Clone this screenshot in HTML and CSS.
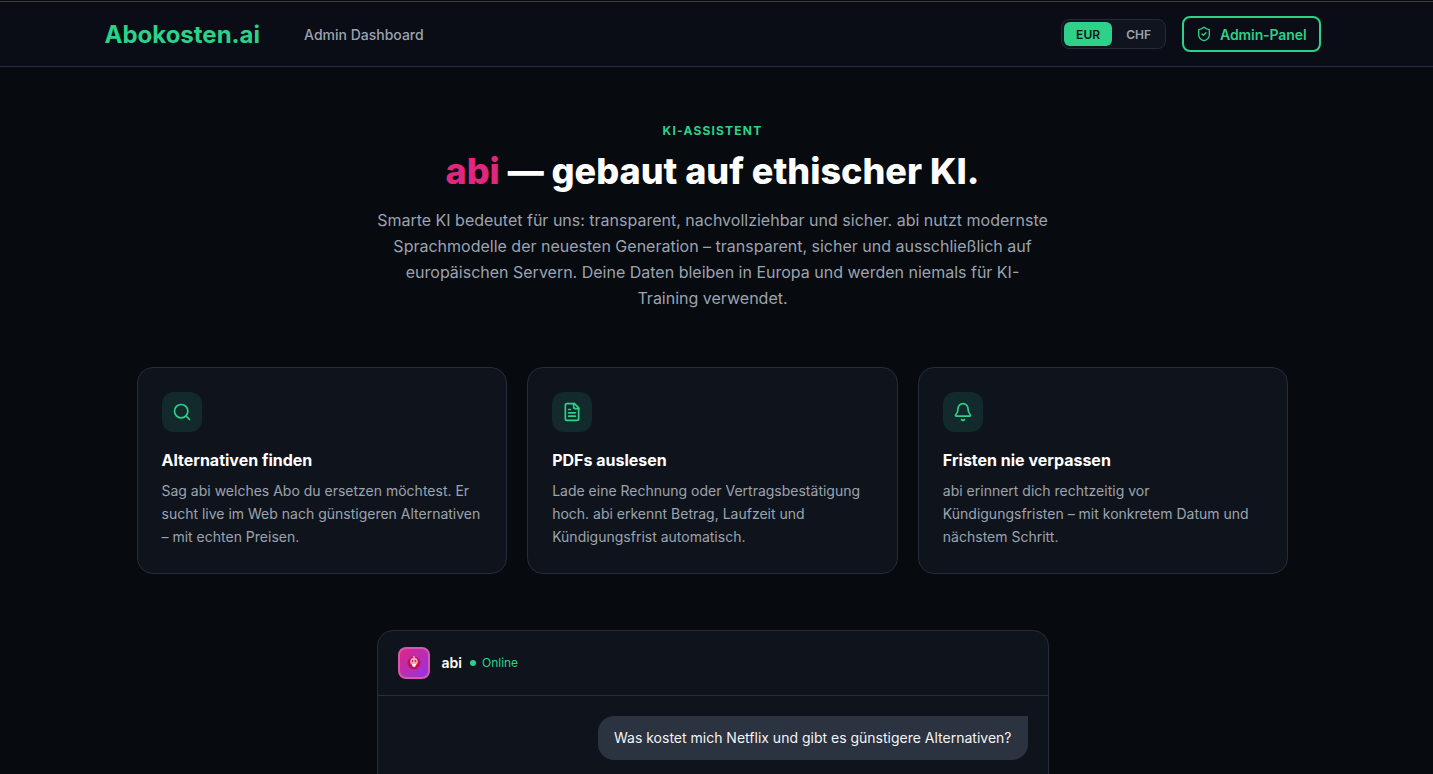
FILE: index.html
```html
<!DOCTYPE html>
<html lang="de">
<head>
<meta charset="utf-8">
<title>Abokosten.ai</title>
<link rel="stylesheet" href="styles.css">
</head>
<body>
<header class="topbar">
  <div class="topbar-inner">
    <div class="brand-group">
      <a class="logo">Abokosten.ai</a>
      <a class="nav-link">Admin Dashboard</a>
    </div>
    <div class="actions">
      <div class="currency">
        <span class="cur cur-active">EUR</span>
        <span class="cur">CHF</span>
      </div>
      <a class="admin-btn">
        <svg class="admin-icon" viewBox="0 0 24 24" fill="none" stroke="currentColor" stroke-width="2" stroke-linecap="round" stroke-linejoin="round"><path d="M20 13c0 5-3.5 7.5-7.66 8.95a1 1 0 0 1-.67-.01C7.5 20.5 4 18 4 13V6a1 1 0 0 1 1-1c2 0 4.500-1.200 6.240-2.720a1.170 1.170 0 0 1 1.520 0C14.510 3.810 17 5 19 5a1 1 0 0 1 1 1z"/><path d="m9 12 2 2 4-4"/></svg>
        Admin-Panel
      </a>
    </div>
  </div>
</header>
<main class="page">
  <section class="hero">
    <div class="eyebrow">KI-ASSISTENT</div>
    <h1 class="title"><span class="pink">abi</span> — gebaut auf ethischer KI.</h1>
    <p class="lead">Smarte KI bedeutet für uns: transparent, nachvollziehbar und sicher. abi nutzt modernste Sprachmodelle der neuesten Generation – transparent, sicher und ausschließlich auf europäischen Servern. Deine Daten bleiben in Europa und werden niemals für KI-Training verwendet.</p>
  </section>
  <section class="cards">
    <article class="card">
      <div class="icon-box"><svg viewBox="0 0 24 24" fill="none" stroke="currentColor" stroke-width="2" stroke-linecap="round" stroke-linejoin="round"><path d="m21 21-4.340-4.340"/><circle cx="11" cy="11" r="8"/></svg></div>
      <h3 class="card-title">Alternativen finden</h3>
      <p class="card-text">Sag abi welches Abo du ersetzen möchtest. Er sucht live im Web nach günstigeren Alternativen – mit echten Preisen.</p>
    </article>
    <article class="card">
      <div class="icon-box"><svg viewBox="0 0 24 24" fill="none" stroke="currentColor" stroke-width="2" stroke-linecap="round" stroke-linejoin="round"><path d="M15 2H6a2 2 0 0 0-2 2v16a2 2 0 0 0 2 2h12a2 2 0 0 0 2-2V7Z"/><path d="M14 2v4a2 2 0 0 0 2 2h4"/><path d="M10 9H8"/><path d="M16 13H8"/><path d="M16 17H8"/></svg></div>
      <h3 class="card-title">PDFs auslesen</h3>
      <p class="card-text">Lade eine Rechnung oder Vertragsbestätigung hoch. abi erkennt Betrag, Laufzeit und Kündigungsfrist automatisch.</p>
    </article>
    <article class="card">
      <div class="icon-box"><svg viewBox="0 0 24 24" fill="none" stroke="currentColor" stroke-width="2" stroke-linecap="round" stroke-linejoin="round"><path d="M10.268 21a2 2 0 0 0 3.464 0"/><path d="M3.262 15.326A1 1 0 0 0 4 17h16a1 1 0 0 0 .74-1.673C19.410 13.956 18 12.499 18 8A6 6 0 0 0 6 8c0 4.499-1.411 5.956-2.738 7.326"/></svg></div>
      <h3 class="card-title">Fristen nie verpassen</h3>
      <p class="card-text">abi erinnert dich rechtzeitig vor Kündigungsfristen – mit konkretem Datum und nächstem Schritt.</p>
    </article>
  </section>
  <section class="chat">
    <div class="chat-head">
      <div class="avatar">
        <svg viewBox="0 0 20 20"><circle cx="10" cy="10" r="6.500" fill="#c8104f"/><circle cx="10" cy="8.500" r="3.800" fill="#f6a5c0"/><rect x="9.200" y="3" width="1.600" height="2" fill="#f6a5c0"/><circle cx="8.600" cy="8" r=".8" fill="#7a0a30"/><circle cx="11.400" cy="8" r=".8" fill="#7a0a30"/><path d="M7.800 11h4.400l-1 2.800H8.800z" fill="#fff"/></svg>
      </div>
      <span class="chat-name">abi</span>
      <span class="status-dot"></span>
      <span class="status">Online</span>
    </div>
    <div class="chat-body">
      <div class="bubble">Was kostet mich Netflix und gibt es günstigere Alternativen?</div>
    </div>
  </section>
</main>
</body>
</html>
```
FILE: styles.css
```css
* { box-sizing: border-box; }
html, body { margin: 0; height: 100%; overflow: hidden; }
body {
  background: #070a0f;
  color: #fff;
  font-family: Inter, "Liberation Sans", sans-serif;
  padding-right: 8px;
  position: relative;
}
.topbar {
  margin: 1px -8px 0 0;
  height: 66px;
  background: #0a0c16;
  border-top: 1px solid #3d3d3f;
  border-bottom: 1px solid #262c3a;
  padding-right: 8px;
}
.topbar-inner {
  width: 1216px;
  height: 64px;
  margin: 0 auto;
  display: flex;
  align-items: center;
  justify-content: space-between;
}
.brand-group { display: flex; align-items: center; gap: 44px; padding-top: 2px; }
.logo { font-size: 24px; font-weight: 700; color: #2dd18a; line-height: 32px; }
.nav-link { font-size: 14px; font-weight: 500; color: #9ca3af; line-height: 20px; }
.actions { display: flex; align-items: center; gap: 16px; }
.currency {
  display: flex;
  align-items: center;
  height: 30px;
  padding: 2px;
  border: 1px solid #232a3a;
  border-radius: 8px;
  background: #10141f;
}
.cur {
  width: 48px;
  height: 24px;
  display: flex;
  align-items: center;
  justify-content: center;
  font-size: 12px;
  font-weight: 600;
  color: #9ca3af;
  border-radius: 6px;
}
.cur + .cur { width: 51px; padding-left: 2px; }
.cur-active { background: #2dd18a; color: #07140f; }
.admin-btn {
  display: flex;
  align-items: center;
  gap: 8px;
  height: 36px;
  padding: 0 12px;
  border: 2px solid #2dd18a;
  border-radius: 8px;
  color: #2dd18a;
  font-size: 14px;
  font-weight: 600;
  letter-spacing: -0.1px;
}
.admin-icon { width: 16px; height: 16px; }
.hero { text-align: center; padding-top: 56px; }
.eyebrow {
  font-size: 12px;
  font-weight: 700;
  letter-spacing: 1.2px;
  line-height: 16px;
  color: #2dd18a;
}
.title {
  margin: 12px 0 0;
  font-size: 36px;
  font-weight: 800;
  line-height: 40px;
}
.pink { color: #e0267f; }
.lead {
  width: 672px;
  margin: 16px auto 0;
  font-size: 16px;
  line-height: 26px;
  color: #9ca3af;
}
.cards {
  width: 1152px;
  margin: 56px auto 0;
  display: grid;
  grid-template-columns: repeat(3, 1fr);
  gap: 20px;
}
.card {
  height: 207px;
  padding: 24px;
  background: #0f141c;
  border: 1px solid #262c3a;
  border-radius: 16px;
}
.icon-box {
  width: 40px;
  height: 40px;
  border-radius: 12px;
  background: #122a2b;
  color: #2dd18a;
  display: flex;
  align-items: center;
  justify-content: center;
}
.icon-box svg { width: 20px; height: 20px; }
.card-title {
  margin: 16px 0 0;
  font-size: 16px;
  font-weight: 700;
  line-height: 24px;
  color: #fff;
}
.card-text {
  margin: 7px 0 0;
  font-size: 14px;
  line-height: 23px;
  color: #9ca3af;
}
.chat {
  width: 672px;
  margin: 56px auto 0;
  background: #0f141c;
  border: 1px solid #262c3a;
  border-radius: 16px;
}
.chat-head {
  height: 65px;
  padding: 0 20px;
  display: flex;
  align-items: center;
  border-bottom: 1px solid #262c3a;
}
.avatar {
  width: 32px;
  height: 32px;
  border-radius: 8px;
  border: 2px solid #d857b0;
  background: linear-gradient(135deg, #e0267f, #9333ea);
  display: flex;
  align-items: center;
  justify-content: center;
  margin-right: 12px;
}
.avatar svg { width: 20px; height: 20px; }
.chat-name { font-size: 14px; font-weight: 600; line-height: 20px; margin: 0 8px 0 0; }
.status-dot { width: 6px; height: 6px; border-radius: 50%; background: #2dd18a; margin-right: 6px; }
.status { font-size: 12px; line-height: 16px; color: #2dd18a; }
.chat-body { padding: 20px; min-height: 240px; display: flex; justify-content: flex-end; align-items: flex-start; }
.bubble {
  padding: 12px 16px;
  background: #2b3240;
  border-radius: 16px 0 16px 16px;
  font-size: 14px;
  line-height: 20px;
  color: #f3f4f6;
}
```
